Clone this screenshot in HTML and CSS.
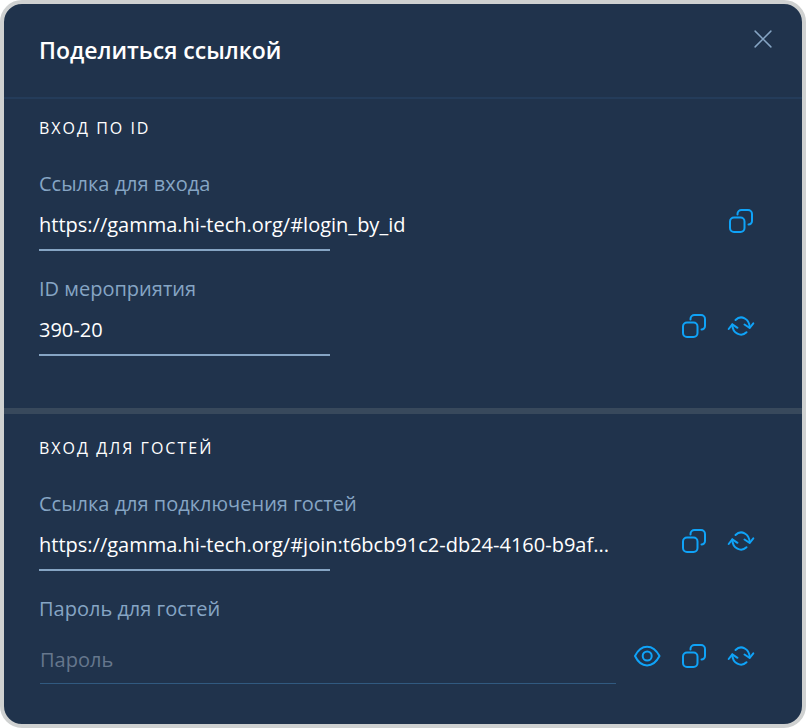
FILE: index.html
```html
<!DOCTYPE html>
<html lang="ru">
<head>
	<meta charset="UTF-8">
	<title>Поделиться ссылкой</title>
	<link rel="stylesheet" href="styles.css">
</head>
<body>
	<svg class="sprite" aria-hidden="true">
		<symbol id="copy" viewBox="0 0 28 28">
			<rect x="3" y="10.500" width="14.500" height="14.500" rx="4"/>
			<path d="M10.500 7.500V7a4 4 0 0 1 4-4H21a4 4 0 0 1 4 4V14a3.500 3.500 0 0 1-3.500 3.500"/>
		</symbol>
		<symbol id="refresh" viewBox="0 0 28 28">
			<path d="M8.500 8C14 2.500 22.500 6.500 22.700 15.500"/>
			<path d="M17.500 12.500l5.200 3.500 3.600-4.700"/>
			<path d="M19.500 20.300C14 25.500 5.500 21.500 5.300 12.500"/>
			<path d="M10.500 15.800l-5.200-3.500-3.600 4.700"/>
		</symbol>
		<symbol id="eye" viewBox="0 0 28 28">
			<path d="M2 14C8 1.500 20 1.500 26.500 14C20 26.500 8 26.500 2 14z"/>
			<circle cx="14.200" cy="14" r="4.500"/>
		</symbol>
	</svg>

	<div class="dialog" role="dialog" aria-labelledby="title">
		<header class="header">
			<h1 class="title" id="title">Поделиться ссылкой</h1>
			<button class="close" type="button" aria-label="Закрыть">
				<svg viewBox="0 0 16 16"><path d="M1 1l14 14M15 1L1 15"/></svg>
			</button>
		</header>

		<section class="section">
			<h2 class="subtitle">ВХОД ПО ID</h2>
			<div class="field">
				<label class="label" for="login">Ссылка для входа</label>
				<div class="row">
					<input class="value" id="login" type="text" readonly value="https://gamma.hi-tech.org/#login_by_id">
					<div class="actions">
						<button class="action" type="button" aria-label="Копировать"><svg><use href="#copy"/></svg></button>
					</div>
				</div>
			</div>
			<div class="field">
				<label class="label" for="event">ID мероприятия</label>
				<div class="row">
					<input class="value" id="event" type="text" readonly value="390-20">
					<div class="actions">
						<button class="action" type="button" aria-label="Копировать"><svg><use href="#copy"/></svg></button>
						<button class="action" type="button" aria-label="Обновить"><svg><use href="#refresh"/></svg></button>
					</div>
				</div>
			</div>
		</section>

		<section class="section guests">
			<h2 class="subtitle">ВХОД ДЛЯ ГОСТЕЙ</h2>
			<div class="field">
				<label class="label" for="join">Ссылка для подключения гостей</label>
				<div class="row">
					<input class="value" id="join" type="text" readonly value="https://gamma.hi-tech.org/#join:t6bcb91c2-db24-4160-b9af...">
					<div class="actions">
						<button class="action" type="button" aria-label="Копировать"><svg><use href="#copy"/></svg></button>
						<button class="action" type="button" aria-label="Обновить"><svg><use href="#refresh"/></svg></button>
					</div>
				</div>
			</div>
			<div class="field">
				<label class="label" for="password">Пароль для гостей</label>
				<div class="row password-row">
					<input class="password" id="password" type="password" placeholder="Пароль">
					<div class="actions">
						<button class="action" type="button" aria-label="Показать"><svg><use href="#eye"/></svg></button>
						<button class="action" type="button" aria-label="Копировать"><svg><use href="#copy"/></svg></button>
						<button class="action" type="button" aria-label="Обновить"><svg><use href="#refresh"/></svg></button>
					</div>
				</div>
			</div>
		</section>
	</div>
</body>
</html>
```
FILE: styles.css
```css
*{
	box-sizing: border-box;
	padding: 0;
	margin: 0;
}
body{
	background-color: white;
	font-family: "Open Sans", sans-serif;
	font-size: 20px;
	color: white;
}
button{
	background: none;
	border: 0;
	cursor: pointer;
}
svg{
	display: block;
	fill: none;
	stroke: currentColor;
	stroke-width: 2;
	stroke-linecap: round;
	stroke-linejoin: round;
}
.sprite{
	display: none;
}
.dialog{
	min-height: 100vh;
	background-color: #20334c;
	border: 4px solid #cfd1d1;
	border-radius: 22px;
}
.header{
	display: flex;
	justify-content: space-between;
	align-items: flex-start;
	padding: 26px 30px 27px 35px;
	border-bottom: 2px solid #243c5a;
}
.title{
	font-size: 23px;
	font-weight: 600;
	line-height: 40px;
}
.close{
	color: #86a5c4;
}
.close svg{
	width: 18px;
	height: 18px;
	stroke-width: 1.300;
}
.section{
	padding: 17px 47px 52px 35px;
}
.guests{
	border-top: 6px solid #38495c;
	padding-top: 22px;
	padding-bottom: 40px;
}
.subtitle{
	margin-bottom: 29px;
	font-size: 16px;
	font-weight: 400;
	line-height: 24px;
	letter-spacing: 2px;
}
.field + .field{
	margin-top: 23px;
}
.label{
	display: block;
	margin-bottom: 2px;
	line-height: 30px;
	color: #86a5c4;
}
.row{
	display: flex;
	align-items: flex-start;
}
.value{
	flex: 1;
	min-width: 0;
	height: 50px;
	padding-bottom: 4px;
	border: 0;
	background: linear-gradient(#86a5c4, #86a5c4) left bottom / 291px 2px no-repeat;
	font: inherit;
	color: inherit;
	text-overflow: ellipsis;
	outline: none;
}
.actions{
	display: flex;
	gap: 19px;
}
.action{
	display: flex;
	align-items: center;
	width: 28px;
	height: 40px;
	color: #0fa3f8;
}
.action svg{
	width: 28px;
	height: 28px;
}
.password-row{
	gap: 17px;
	padding-top: 10px;
}
.password{
	flex: 1;
	min-width: 0;
	height: 48px;
	margin-left: 1px;
	background: none;
	border: 0;
	border-bottom: 1px solid #315a80;
	font: inherit;
	color: inherit;
	outline: none;
}
.password::placeholder{
	color: #66778d;
}
```
